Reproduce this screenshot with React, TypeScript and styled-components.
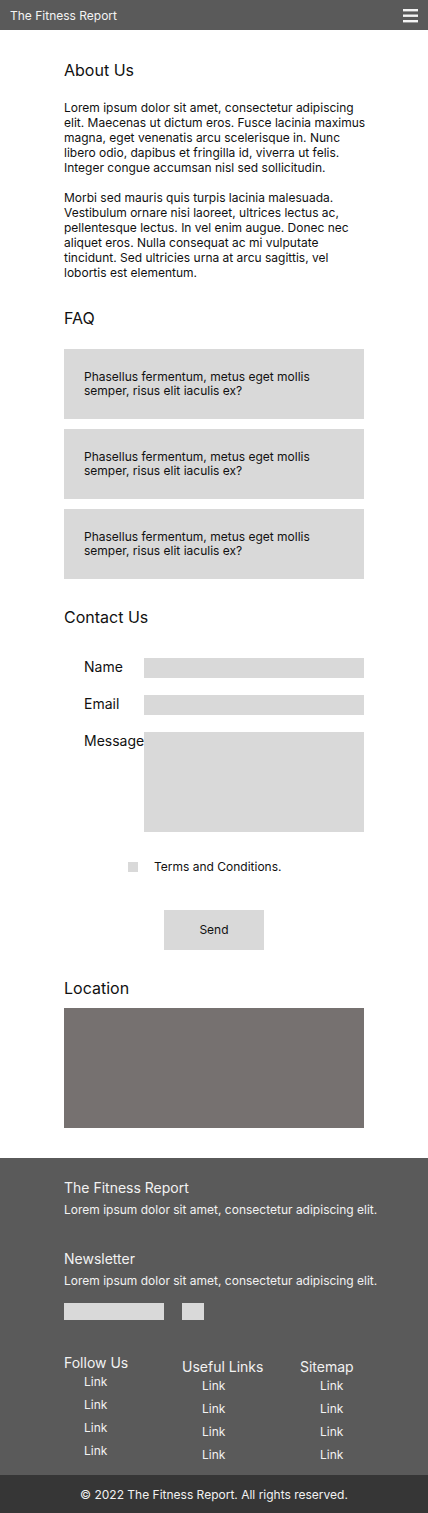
import React from "react";
import styled, { createGlobalStyle } from "styled-components";

const GlobalStyle = createGlobalStyle`
  html, body { margin: 0; padding: 0; background: #ffffff; }
  body { font-family: Inter, "Noto Sans", Arial, sans-serif; color: #111111; }
  * { box-sizing: border-box; }
`;

const Page = styled.div`
  width: 428px;
  display: flex;
  flex-direction: column;
`;

const TopBar = styled.header`
  height: 30px;
  background: #5a5a5a;
  display: flex;
  align-items: center;
  justify-content: space-between;
  padding: 0 10px 0 10px;
`;

const Brand = styled.span`
  font-size: 12px;
  color: #f4f4f4;
  line-height: 14.5px;
  margin-top: 2px;
`;

const MenuButton = styled.span`
  display: flex;
  width: 15px;
  height: 30px;
`;

const Main = styled.main`
  padding: 31px 64px 30px;
  display: flex;
  flex-direction: column;
  gap: 29px;
`;

const Section = styled.section<{ $gap?: number }>`
  display: flex;
  flex-direction: column;
  gap: ${(p) => p.$gap ?? 20}px;
`;

const Heading = styled.h2`
  margin: 0;
  font-size: 16px;
  font-weight: 400;
  line-height: 19.4px;
  color: #111111;
`;

const Copy = styled.div`
  display: flex;
  flex-direction: column;
  gap: 15px;
`;

const Paragraph = styled.p`
  margin: 0;
  font-size: 12px;
  line-height: 15px;
  color: #111111;
  white-space: nowrap;
`;

const FaqList = styled.div`
  display: flex;
  flex-direction: column;
  gap: 10px;
`;

const FaqItem = styled.div`
  background: #d9d9d9;
  height: 70px;
  padding: 21px 20px 0;
  font-size: 12px;
  line-height: 14.5px;
  color: #111111;
`;

const Form = styled.form`
  display: flex;
  flex-direction: column;
  padding: 11px 0 0 20px;
  gap: 17px;
`;

const FieldRow = styled.label`
  display: flex;
  align-items: flex-start;
`;

const FieldLabel = styled.span`
  width: 60px;
  flex: none;
  font-size: 14px;
  line-height: 17px;
  color: #111111;
`;

const FieldBox = styled.span<{ $tall?: boolean }>`
  display: block;
  flex: 1;
  height: ${(p) => (p.$tall ? 100 : 20)}px;
  background: #d9d9d9;
`;

const CheckRow = styled.div`
  display: flex;
  align-items: center;
  gap: 16px;
  margin: 11px 0 0 44px;
  height: 14.5px;
`;

const CheckBox = styled.span`
  width: 10px;
  height: 10px;
  background: #d9d9d9;
  flex: none;
`;

const CheckText = styled.span`
  font-size: 12px;
  line-height: 14.5px;
  color: #111111;
`;

const SendButton = styled.div`
  align-self: center;
  margin: 18px 0 0 -20px;
  width: 100px;
  height: 40px;
  background: #d9d9d9;
  display: flex;
  align-items: center;
  justify-content: center;
  font-size: 12px;
  color: #111111;
`;

const MapBox = styled.div`
  height: 120px;
  background: #767170;
`;

const Footer = styled.footer`
  background: #5a5a5a;
  color: #f2f2f2;
  padding: 21px 0 12px 64px;
  display: flex;
  flex-direction: column;
`;

const FooterBlock = styled.div<{ $mt?: number }>`
  display: flex;
  flex-direction: column;
  gap: 7px;
  margin-top: ${(p) => p.$mt ?? 0}px;
`;

const FooterTitle = styled.div`
  font-size: 14px;
  line-height: 17px;
`;

const FooterText = styled.div`
  font-size: 12px;
  line-height: 14.5px;
`;

const NewsletterRow = styled.div`
  display: flex;
  gap: 18px;
  margin-top: 15px;
`;

const NewsInput = styled.span<{ $w: number }>`
  width: ${(p) => p.$w}px;
  height: 17px;
  background: #d9d9d9;
`;

const Columns = styled.div`
  display: grid;
  grid-template-columns: 118px 118px 1fr;
  margin-top: 34px;
  align-items: start;
`;

const Column = styled.div<{ $offset?: number }>`
  display: flex;
  flex-direction: column;
  padding-top: ${(p) => p.$offset ?? 0}px;
`;

const ColumnTitle = styled.div`
  font-size: 14px;
  line-height: 17px;
  margin-bottom: 4px;
`;

const LinkList = styled.div`
  display: flex;
  flex-direction: column;
  gap: 8.5px;
  padding-left: 20px;
`;

const FooterLink = styled.a`
  font-size: 12px;
  line-height: 14.5px;
  color: #f2f2f2;
  text-decoration: none;
`;

const BottomBar = styled.div`
  height: 38px;
  background: #363636;
  color: #f2f2f2;
  display: flex;
  align-items: center;
  justify-content: center;
  font-size: 12px;
  padding-top: 2px;
`;

const aboutParagraphs = [
  [
    "Lorem ipsum dolor sit amet, consectetur adipiscing",
    "elit. Maecenas ut dictum eros. Fusce lacinia maximus",
    "magna, eget venenatis arcu scelerisque in. Nunc",
    "libero odio, dapibus et fringilla id, viverra ut felis.",
    "Integer congue accumsan nisl sed sollicitudin.",
  ],
  [
    "Morbi sed mauris quis turpis lacinia malesuada.",
    "Vestibulum ornare nisi laoreet, ultrices lectus ac,",
    "pellentesque lectus. In vel enim augue. Donec nec",
    "aliquet eros. Nulla consequat ac mi vulputate",
    "tincidunt. Sed ultricies urna at arcu sagittis, vel",
    "lobortis est elementum.",
  ],
];

const faq = [1, 2, 3];

const linkColumns = [
  { title: "Follow Us", offset: 0 },
  { title: "Useful Links", offset: 4 },
  { title: "Sitemap", offset: 4 },
];

export default function App() {
  return (
    <Page>
      <GlobalStyle />
      <TopBar>
        <Brand>The Fitness Report</Brand>
        <MenuButton>
          <svg width="15" height="30" viewBox="0 0 15 30">
            <rect x="0" y="9" width="15" height="2.4" fill="#f4f4f4" />
            <rect x="0" y="14.5" width="15" height="2.4" fill="#f4f4f4" />
            <rect x="0" y="20" width="15" height="2.4" fill="#f4f4f4" />
          </svg>
        </MenuButton>
      </TopBar>

      <Main>
        <Section>
          <Heading>About Us</Heading>
          <Copy>
            {aboutParagraphs.map((lines, i) => (
              <Paragraph key={i}>
                {lines.map((l, j) => (
                  <React.Fragment key={j}>
                    {l}
                    {j < lines.length - 1 && <br />}
                  </React.Fragment>
                ))}
              </Paragraph>
            ))}
          </Copy>
        </Section>

        <Section>
          <Heading>FAQ</Heading>
          <FaqList>
            {faq.map((i) => (
              <FaqItem key={i}>
                Phasellus fermentum, metus eget mollis
                <br />
                semper, risus elit iaculis ex?
              </FaqItem>
            ))}
          </FaqList>
        </Section>

        <Section>
          <Heading>Contact Us</Heading>
          <Form onSubmit={(e) => e.preventDefault()}>
            <FieldRow>
              <FieldLabel>Name</FieldLabel>
              <FieldBox />
            </FieldRow>
            <FieldRow>
              <FieldLabel>Email</FieldLabel>
              <FieldBox />
            </FieldRow>
            <FieldRow>
              <FieldLabel>Message</FieldLabel>
              <FieldBox $tall />
            </FieldRow>
            <CheckRow>
              <CheckBox />
              <CheckText>Terms and Conditions.</CheckText>
            </CheckRow>
            <SendButton>Send</SendButton>
          </Form>
        </Section>

        <Section $gap={10}>
          <Heading>Location</Heading>
          <MapBox />
        </Section>
      </Main>

      <Footer>
        <FooterBlock>
          <FooterTitle>The Fitness Report</FooterTitle>
          <FooterText>Lorem ipsum dolor sit amet, consectetur adipiscing elit.</FooterText>
        </FooterBlock>
        <FooterBlock $mt={32}>
          <FooterTitle>Newsletter</FooterTitle>
          <FooterText>Lorem ipsum dolor sit amet, consectetur adipiscing elit.</FooterText>
        </FooterBlock>
        <NewsletterRow>
          <NewsInput $w={100} />
          <NewsInput $w={22} />
        </NewsletterRow>
        <Columns>
          {linkColumns.map((c) => (
            <Column key={c.title} $offset={c.offset}>
              <ColumnTitle>{c.title}</ColumnTitle>
              <LinkList>
                {[0, 1, 2, 3].map((n) => (
                  <FooterLink key={n} href="#">
                    Link
                  </FooterLink>
                ))}
              </LinkList>
            </Column>
          ))}
        </Columns>
      </Footer>
      <BottomBar>© 2022 The Fitness Report. All rights reserved.</BottomBar>
    </Page>
  );
}
